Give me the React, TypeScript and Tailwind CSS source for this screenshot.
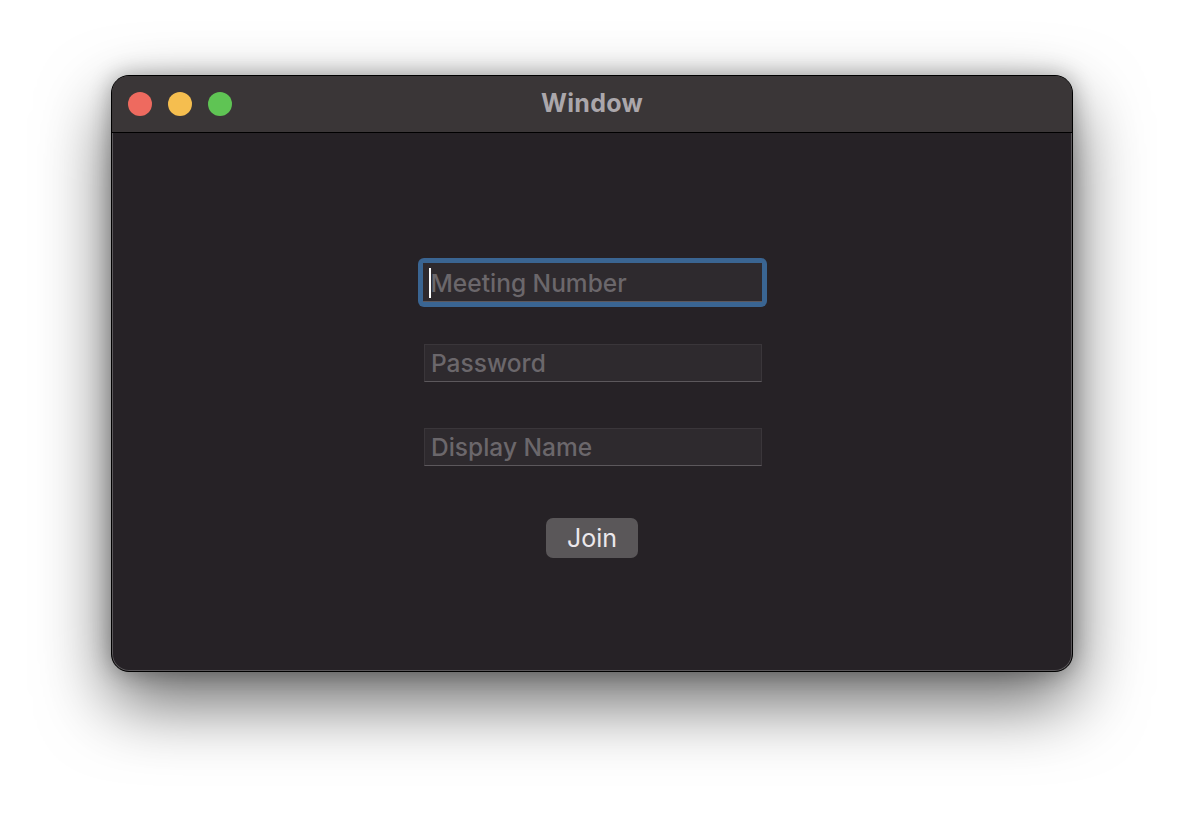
import React from "react";

const font = { fontFamily: "Inter, 'Liberation Sans', sans-serif" };

function Field({ placeholder }: { placeholder: string }) {
  return (
    <div className="w-[338px] h-[38px] flex items-center bg-[#2e2a2e] border border-[#3a363a] border-b-[#5c585c] pl-[6px] ml-[2px]">
      <span className="text-[24.5px] font-medium leading-none text-[#6b676b]">{placeholder}</span>
    </div>
  );
}

function App() {
  return (
    <div className="w-[1184px] h-[820px] bg-white pt-[75px]" style={font}>
      <div className="mx-auto w-[962px] h-[597px] rounded-[18px] overflow-hidden border border-black bg-[#262226] flex flex-col shadow-[0_30px_70px_rgba(0,0,0,0.6),0_0_22px_rgba(0,0,0,0.3),inset_0_0_0_1px_#5a575a]">
        {/* Title bar */}
        <div className="relative h-[57px] bg-[#3a3637] border-b border-black flex items-center px-[16px] shrink-0">
          <div className="flex gap-[16px]">
            <span className="w-[24px] h-[24px] rounded-full bg-[#ee6a5f]" />
            <span className="w-[24px] h-[24px] rounded-full bg-[#f5be4f]" />
            <span className="w-[24px] h-[24px] rounded-full bg-[#5fc454]" />
          </div>
          <div className="absolute inset-0 flex items-center justify-center pointer-events-none">
            <span className="text-[25px] font-bold text-[#aba7ab] tracking-[0.3px]">Window</span>
          </div>
        </div>

        {/* Content */}
        <div className="flex-1 flex flex-col items-center pt-[130px]">
          <div className="rounded-[6px] p-[5px] bg-[#3a6592] -my-[5px]">
            <div className="w-[339px] h-[39px] flex items-center bg-[#2e2a2e] border-b border-[#5c585c] pl-[6px] pt-[2px]">
              <span className="w-[2px] h-[30px] bg-white" />
              <span className="text-[24.5px] font-medium leading-none text-[#6b676b]">Meeting Number</span>
            </div>
          </div>
          <div className="mt-[42px]">
            <Field placeholder="Password" />
          </div>
          <div className="mt-[46px]">
            <Field placeholder="Display Name" />
          </div>
          <button className="mt-[52px] w-[92px] h-[40px] rounded-[7px] bg-[#5a5759] text-[25px] text-[#ece8ec] leading-none">
            Join
          </button>
        </div>
      </div>
    </div>
  );
}

export default App;
